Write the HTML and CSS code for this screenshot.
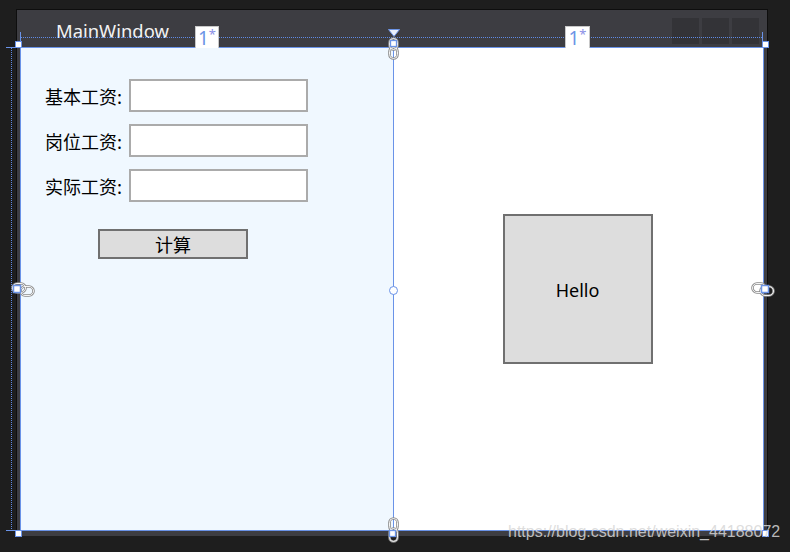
FILE: index.html
```html
<!DOCTYPE html>
<html>
<head>
<meta charset="utf-8">
<link rel="stylesheet" href="styles.css">
</head>
<body>
<div class="window">
  <div class="titlebar">
    <span class="title">MainWindow</span>
    <div class="caption-btns"><span></span><span></span><span></span></div>
  </div>
  <div class="client">
    <div class="pane left">
      <div class="form">
        <div class="row"><span class="label">基本工资:</span><div class="textbox"></div></div>
        <div class="row"><span class="label">岗位工资:</span><div class="textbox"></div></div>
        <div class="row"><span class="label">实际工资:</span><div class="textbox"></div></div>
        <div class="btn">计算</div>
      </div>
    </div>
    <div class="splitter"></div>
    <div class="pane right"><div class="hello">Hello</div></div>
  </div>
</div>

<div class="dotline-h"></div>
<div class="dotline-v"></div>
<div class="tick tick-tl"></div>
<div class="tick tick-tr"></div>
<div class="tick tick-h1"></div>
<div class="tick tick-h2"></div>

<div class="badge badge-1">1<sup>*</sup></div>
<div class="badge badge-2">1<sup>*</sup></div>

<div class="handle h-tl"></div>
<div class="handle h-tr"></div>
<div class="handle h-bl"></div>
<div class="handle h-br"></div>

<svg class="tri" width="12" height="8" viewBox="0 0 12 8"><path d="M0.5 0.5 H11.5 L6 7.5 Z" fill="#e9effa" stroke="#6c94e6" stroke-width="1"/></svg>

<svg class="chain chain-top" width="11" height="23" viewBox="0 0 11 23">
  <rect x="1.5" y="1.5" width="8" height="11" rx="4" fill="none" stroke="#8a8a8a" stroke-width="2.6"/>
  <rect x="1.5" y="10.5" width="8" height="11" rx="4" fill="none" stroke="#8a8a8a" stroke-width="2.6"/>
  <rect x="1.5" y="1.5" width="8" height="11" rx="4" fill="none" stroke="#ffffff" stroke-width="0.9"/>
  <rect x="1.5" y="10.5" width="8" height="11" rx="4" fill="none" stroke="#ffffff" stroke-width="0.9"/>
  <rect x="2.5" y="3.5" width="6" height="6" fill="#ffffff" stroke="#6c94e6" stroke-width="1.3"/>
</svg>

<svg class="chain chain-bottom" width="11" height="26" viewBox="0 0 11 26">
  <rect x="1.5" y="1.5" width="8" height="12" rx="4" fill="none" stroke="#8a8a8a" stroke-width="2.6"/>
  <rect x="1.5" y="11.5" width="8" height="13" rx="4" fill="none" stroke="#8a8a8a" stroke-width="2.6"/>
  <rect x="1.5" y="1.5" width="8" height="12" rx="4" fill="none" stroke="#ffffff" stroke-width="0.9"/>
  <rect x="1.5" y="11.5" width="8" height="13" rx="4" fill="none" stroke="#ffffff" stroke-width="0.9"/>
  <rect x="1.5" y="13.5" width="6" height="6" fill="#ffffff" stroke="#6c94e6" stroke-width="1.3"/>
</svg>

<svg class="chain chain-left" width="24" height="17" viewBox="0 0 24 17">
  <rect x="1.5" y="2.5" width="13" height="9" rx="4.5" fill="none" stroke="#8a8a8a" stroke-width="2.6"/>
  <rect x="9.5" y="5.5" width="13" height="9" rx="4.5" fill="none" stroke="#8a8a8a" stroke-width="2.6"/>
  <rect x="1.5" y="2.5" width="13" height="9" rx="4.5" fill="none" stroke="#ffffff" stroke-width="0.9"/>
  <rect x="9.5" y="5.5" width="13" height="9" rx="4.5" fill="none" stroke="#ffffff" stroke-width="0.9"/>
  <rect x="2.5" y="4.5" width="7" height="7" fill="#ffffff" stroke="#6c94e6" stroke-width="1.5"/>
</svg>

<svg class="chain chain-right" width="24" height="17" viewBox="0 0 24 17">
  <rect x="1.5" y="2.5" width="13" height="9" rx="4.5" fill="none" stroke="#8a8a8a" stroke-width="2.6"/>
  <rect x="9.5" y="5.5" width="13" height="9" rx="4.5" fill="none" stroke="#8a8a8a" stroke-width="2.6"/>
  <rect x="1.5" y="2.5" width="13" height="9" rx="4.5" fill="none" stroke="#ffffff" stroke-width="0.9"/>
  <rect x="9.5" y="5.5" width="13" height="9" rx="4.5" fill="none" stroke="#ffffff" stroke-width="0.9"/>
  <rect x="10.5" y="4.5" width="7" height="7" fill="#ffffff" stroke="#6c94e6" stroke-width="1.5"/>
</svg>

<div class="circle"></div>

<div class="watermark">https://blog.csdn.net/weixin_44188072</div>
</body>
</html>
```

FILE: styles.css
```css
html, body {
  margin: 0;
  padding: 0;
}
body {
  width: 790px;
  height: 552px;
  background: #1e1e1e;
  position: relative;
  overflow: hidden;
  font-family: "Noto Sans", "Noto Sans CJK SC", sans-serif;
}
.window {
  position: absolute;
  left: 16px;
  top: 9px;
  width: 752px;
  height: 527px;
  box-sizing: border-box;
  background: #3d3d42;
  border: 1px solid #0e0e0e;
  border-bottom: none;
  display: flex;
  flex-direction: column;
}
.titlebar {
  height: 37px;
  display: flex;
  justify-content: space-between;
  align-items: flex-start;
  flex: none;
}
.title {
  color: #f2f2f2;
  font-family: "Noto Sans", sans-serif;
  font-size: 18.4px;
  line-height: 22px;
  margin-top: 10px;
  margin-left: 39px;
}
.caption-btns {
  display: flex;
  gap: 3px;
  margin-top: 8px;
  margin-right: 8px;
}
.caption-btns span {
  width: 27px;
  height: 26px;
  background: #333337;
}
.client {
  margin: 0 3px;
  height: 484px;
  box-sizing: border-box;
  border: 1px solid #6a93e8;
  display: grid;
  grid-template-columns: 372px 1px 369px;
  flex: none;
}
.pane.left {
  background: #f0f8ff;
}
.pane.right {
  background: #ffffff;
  display: flex;
  align-items: center;
  justify-content: center;
}
.splitter {
  background: #6a93e8;
}
.form {
  padding: 31px 0 0 24px;
  display: flex;
  flex-direction: column;
  gap: 12px;
}
.row {
  display: flex;
  align-items: center;
  height: 33px;
}
.label {
  width: 84px;
  font-family: "Noto Sans CJK SC", sans-serif;
  font-size: 18px;
  line-height: 24px;
  color: #000;
}
.textbox {
  width: 179px;
  height: 33px;
  box-sizing: border-box;
  border: 2px solid #ababab;
  background: #fff;
}
.btn {
  margin-top: 15px;
  margin-left: 53px;
  width: 150px;
  height: 30px;
  box-sizing: border-box;
  border: 2px solid #707070;
  background: #dddddd;
  text-align: center;
  font-family: "Noto Sans CJK SC", sans-serif;
  font-size: 18px;
  line-height: 26px;
  color: #000;
}
.hello {
  width: 150px;
  height: 150px;
  margin-left: -2px;
  box-sizing: border-box;
  border: 2px solid #707070;
  background: #dddddd;
  display: flex;
  align-items: center;
  justify-content: center;
  font-family: "Noto Sans", sans-serif;
  font-size: 18px;
  color: #000;
  padding-top: 2px;
}
/* designer overlays */
.dotline-h {
  position: absolute;
  left: 21px;
  top: 37px;
  width: 741px;
  height: 1px;
  background: repeating-linear-gradient(to right, #5f8ae4 0 1px, transparent 1px 2px);
}
.dotline-v {
  position: absolute;
  left: 11px;
  top: 48px;
  width: 1px;
  height: 482px;
  background: repeating-linear-gradient(to bottom, #5f8ae4 0 1px, transparent 1px 2px);
}
.tick {
  position: absolute;
  background: #6a93e8;
}
.tick-tl { left: 20px; top: 32px; width: 1px; height: 16px; }
.tick-tr { left: 762px; top: 32px; width: 1px; height: 16px; }
.tick-h1 { left: 6px; top: 47px; width: 15px; height: 1px; }
.tick-h2 { left: 6px; top: 530px; width: 15px; height: 1px; }
.badge {
  position: absolute;
  top: 26px;
  height: 22px;
  box-sizing: border-box;
  background: #ffffff;
  border: 1px solid #c8c8c8;
  border-bottom: none;
  color: #6c94e6;
  font-family: "Noto Sans", sans-serif;
  font-size: 19px;
  line-height: 22px;
  text-align: center;
}
.badge sup {
  font-size: 13px;
  vertical-align: top;
  line-height: 14px;
  color: #8a8ee6;
}
.badge-1 { left: 195px; width: 24px; }
.badge-2 { left: 565px; width: 25px; }
.handle {
  position: absolute;
  width: 7px;
  height: 7px;
  box-sizing: border-box;
  background: #ffffff;
  border: 1px solid #6a93e8;
}
.h-tl { left: 15px; top: 41px; }
.h-tr { left: 762px; top: 41px; }
.h-bl { left: 15px; top: 530px; }
.h-br { left: 762px; top: 530px; }
.tri { position: absolute; left: 388px; top: 29px; }
.chain { position: absolute; }
.chain-top { left: 388px; top: 37px; }
.chain-bottom { left: 388px; top: 517px; }
.chain-left { left: 11px; top: 281px; }
.chain-right { left: 751px; top: 281px; }
.circle {
  position: absolute;
  left: 389px;
  top: 286px;
  width: 9px;
  height: 9px;
  box-sizing: border-box;
  border: 1.5px solid #6a93e8;
  border-radius: 50%;
  background: #ffffff;
}
.watermark {
  position: absolute;
  left: 508px;
  top: 522px;
  font-family: "Liberation Sans", Arial, sans-serif;
  font-size: 16px;
  line-height: 20px;
  color: rgba(215, 215, 215, 0.85);
  white-space: nowrap;
}
```
